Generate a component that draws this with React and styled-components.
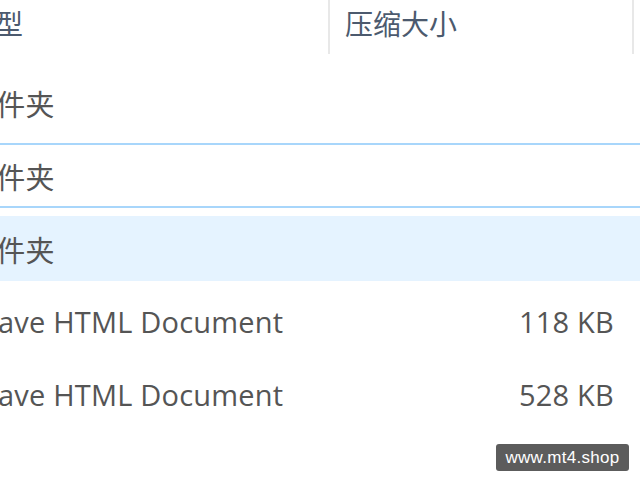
import React from "react";
import styled, { createGlobalStyle } from "styled-components";

const GlobalStyle = createGlobalStyle`
  html, body {
    margin: 0;
    padding: 0;
    background: #ffffff;
    overflow: hidden;
  }
  body {
    width: 640px;
    height: 480px;
    font-family: "Open Sans", "Noto Sans CJK SC", sans-serif;
  }
`;

const Viewport = styled.div`
  position: relative;
  width: 640px;
  height: 480px;
  overflow: hidden;
`;

/* The list is scrolled a little to the right, so the name column sits off-screen */
const Table = styled.div`
  margin-left: -48px;
  width: 800px;
  display: flex;
  flex-direction: column;
`;

const HeaderRow = styled.div`
  display: grid;
  grid-template-columns: 378px 304px 1fr;
  height: 54px;
`;

const HeaderCell = styled.div`
  box-sizing: border-box;
  padding: 6px 15px 0;
  line-height: 36px;
  font-size: 28px;
  color: #4c5a6e;
  border-right: ${(p) => (p.$divider ? "2px solid #e8e8e8" : "none")};
  white-space: nowrap;
`;

const Rows = styled.div`
  display: flex;
  flex-direction: column;
  gap: 8px;
  padding-top: 16px;
`;

const Row = styled.div`
  box-sizing: border-box;
  display: grid;
  grid-template-columns: 378px 304px 1fr;
  align-items: center;
  height: 65px;
  background: ${(p) => (p.$selected ? "#e5f3ff" : "#ffffff")};
  border-top: 2px solid ${(p) => (p.$focused ? "#a8d6fb" : "transparent")};
  border-bottom: 2px solid ${(p) => (p.$focused ? "#a8d6fb" : "transparent")};
`;

const Cell = styled.div`
  padding: 0 ${(p) => (p.$right ? "20px" : "15px")} 0 15px;
  text-align: ${(p) => (p.$right ? "right" : "left")};
  font-size: 29px;
  letter-spacing: 0.2px;
  color: #555555;
  white-space: nowrap;
`;

const Badge = styled.div`
  position: absolute;
  left: 496px;
  top: 444px;
  width: 133px;
  height: 27px;
  box-sizing: border-box;
  display: flex;
  align-items: center;
  justify-content: center;
  background: #5c5c5c;
  border-radius: 3px;
  color: #ffffff;
  font-family: "Liberation Sans", Arial, sans-serif;
  font-size: 17px;
  letter-spacing: 0.3px;
`;

const items = [
  { type: "文件夹", size: "" },
  { type: "文件夹", size: "", focused: true },
  { type: "文件夹", size: "", selected: true },
  { type: "Brave HTML Document", size: "118 KB" },
  { type: "Brave HTML Document", size: "528 KB" },
];

export default function App() {
  return (
    <Viewport>
      <GlobalStyle />
      <Table>
        <HeaderRow>
          <HeaderCell $divider>类型</HeaderCell>
          <HeaderCell $divider>压缩大小</HeaderCell>
          <HeaderCell />
        </HeaderRow>
        <Rows>
          {items.map((it, i) => (
            <Row key={i} $focused={it.focused} $selected={it.selected}>
              <Cell>{it.type}</Cell>
              <Cell $right>{it.size}</Cell>
              <Cell />
            </Row>
          ))}
        </Rows>
      </Table>
      <Badge>www.mt4.shop</Badge>
    </Viewport>
  );
}
